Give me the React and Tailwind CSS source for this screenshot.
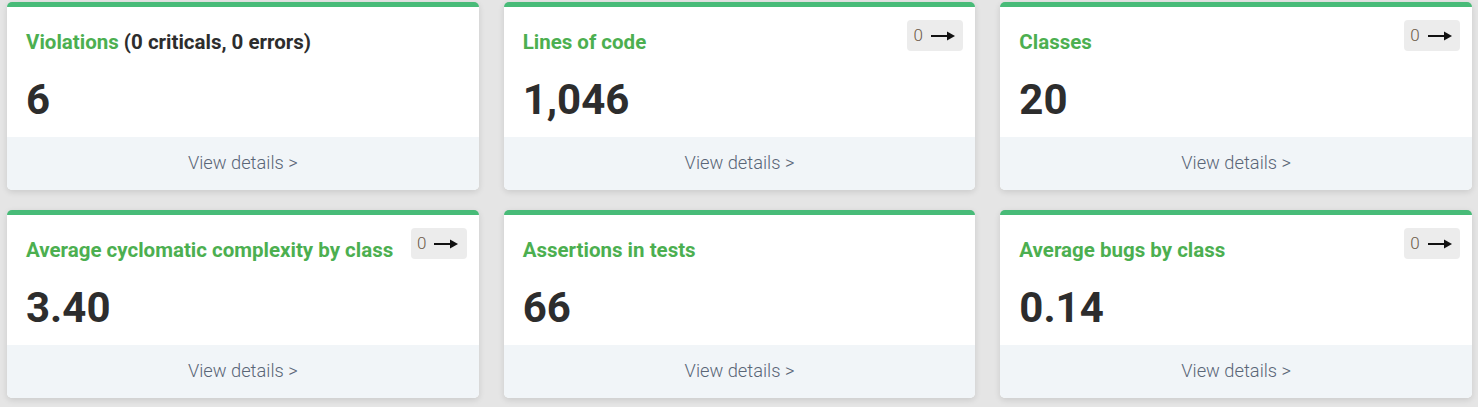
const cards = [
  { title: 'Violations', extra: '(0 criticals, 0 errors)', value: '6', badge: false },
  { title: 'Lines of code', value: '1,046', badge: true },
  { title: 'Classes', value: '20', badge: true },
  { title: 'Average cyclomatic complexity by class', value: '3.40', badge: true },
  { title: 'Assertions in tests', value: '66', badge: false },
  { title: 'Average bugs by class', value: '0.14', badge: true },
];

const Arrow = () => (
  <svg width="24" height="10" viewBox="0 0 24 10" className="block">
    <rect x="0" y="4" width="17" height="2" fill="#111" />
    <path d="M16 0.5 L24 5 L16 9.5 Z" fill="#111" />
  </svg>
);

const Card = ({ title, extra, value, badge }) => (
  <div className="relative bg-white rounded-[5px] border-t-[5px] border-[#48bb78] overflow-hidden shadow-[0_2px_6px_rgba(0,0,0,0.12)] flex flex-col">
    {badge && (
      <div className="absolute top-[13px] right-[12px] h-[31px] w-[56px] rounded-[4px] bg-[#ececec] flex items-center justify-center gap-[8px] pr-[2px]">
        <span className="text-[17px] font-light text-[#6b5a48] leading-none">0</span>
        <Arrow />
      </div>
    )}
    <div className="px-[19px] pt-[22px] pb-[14px]">
      <div className="text-[20.5px] leading-[26px] font-bold text-[#4caf50]">
        {title}
        {extra && <span className="text-[#2d2d2d]"> {extra}</span>}
      </div>
      <div className="mt-[22px] text-[42px] leading-[46px] font-bold text-[#2d2d2d]">{value}</div>
    </div>
    <div className="h-[53px] pb-[2px] bg-[#f1f5f8] flex items-center justify-center">
      <span className="text-[18.3px] font-light text-[#5a6677]">View details &gt;</span>
    </div>
  </div>
);

export default function App() {
  return (
    <div
      className="w-[1478px] h-[407px] bg-[#e5e5e5] pl-[7px] pr-[6px] pt-[2px]"
      style={{ fontFamily: 'Roboto, "Liberation Sans", sans-serif' }}
    >
      <div className="grid grid-cols-3 gap-x-[25px] gap-y-[20px]">
        {cards.map((c) => (
          <Card key={c.title} {...c} />
        ))}
      </div>
    </div>
  );
}
